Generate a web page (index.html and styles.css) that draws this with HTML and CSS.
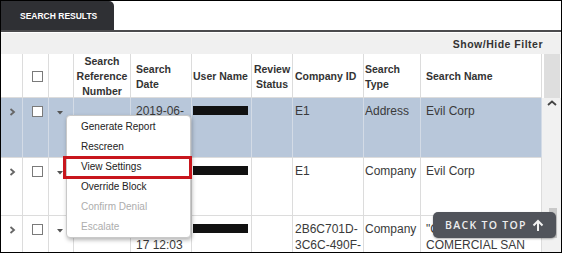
FILE: index.html
```html
<html>

<head>
  <link rel="stylesheet" href="styles.css">
</head>

<body>
  <div class="frame">
    <div class="tabbar">
      <div class="tab">SEARCH RESULTS</div>
    </div>
    <div class="filterbar">Show/Hide Filter</div>

    <div class="head">
      <div class="th"></div>
      <div class="th"><div class="cb cb-head"></div></div>
      <div class="th"></div>
      <div class="th center">Search<br>Reference<br>Number</div>
      <div class="th pad5">Search<br>Date</div>
      <div class="th pad1">User Name</div>
      <div class="th center">Review<br>Status</div>
      <div class="th pad2">Company ID</div>
      <div class="th pad1">Search<br>Type</div>
      <div class="th pad5">Search Name</div>
      <div class="gutter"></div>
    </div>

    <div class="body">
      <div class="rows">
        <div class="row r1 sel">
          <div class="td icon">
            <svg class="chev" width="7" height="8" viewBox="0 0 7 8"><polyline points="1.5,1 5,4 1.5,7" fill="none" stroke="#666" stroke-width="1.8"/></svg>
          </div>
          <div class="td icon"><div class="cb"></div></div>
          <div class="td icon">
            <svg class="caret" width="6" height="4" viewBox="0 0 6 4"><polygon points="0,0 6,0 3,3.5" fill="#555"/></svg>
          </div>
          <div class="td"></div>
          <div class="td pad5">2019-06-</div>
          <div class="td pad1"><div class="redact"></div></div>
          <div class="td"></div>
          <div class="td pad2">E1</div>
          <div class="td pad1">Address</div>
          <div class="td pad5">Evil Corp</div>
        </div>

        <div class="row r2">
          <div class="td icon">
            <svg class="chev" width="7" height="8" viewBox="0 0 7 8"><polyline points="1.5,1 5,4 1.5,7" fill="none" stroke="#666" stroke-width="1.8"/></svg>
          </div>
          <div class="td icon"><div class="cb"></div></div>
          <div class="td icon">
            <svg class="caret" width="6" height="4" viewBox="0 0 6 4"><polygon points="0,0 6,0 3,3.5" fill="#555"/></svg>
          </div>
          <div class="td"></div>
          <div class="td"></div>
          <div class="td pad1"><div class="redact"></div></div>
          <div class="td"></div>
          <div class="td pad2">E1</div>
          <div class="td pad1">Company</div>
          <div class="td pad5">Evil Corp</div>
        </div>

        <div class="row r3">
          <div class="td icon">
            <svg class="chev" width="7" height="8" viewBox="0 0 7 8"><polyline points="1.5,1 5,4 1.5,7" fill="none" stroke="#666" stroke-width="1.8"/></svg>
          </div>
          <div class="td icon"><div class="cb"></div></div>
          <div class="td icon">
            <svg class="caret" width="6" height="4" viewBox="0 0 6 4"><polygon points="0,0 6,0 3,3.5" fill="#555"/></svg>
          </div>
          <div class="td"></div>
          <div class="td pad5 second">17 12:03</div>
          <div class="td pad1"><div class="redact"></div></div>
          <div class="td"></div>
          <div class="td pad2">2B6C701D-<br>3C6C-490F-</div>
          <div class="td pad1">Company</div>
          <div class="td pad5">"C<br>COMERCIAL SAN</div>
        </div>
      </div>

      <div class="vscroll">
        <svg class="up" width="10" height="6" viewBox="0 0 10 6"><polyline points="1,5 5,1.5 9,5" fill="none" stroke="#444" stroke-width="1.8"/></svg>
        <div class="thumb"></div>
      </div>
    </div>

    <!-- row actions dropdown -->
    <div class="menu">
      <div class="item">Generate Report</div>
      <div class="item">Rescreen</div>
      <div class="item">View Settings</div>
      <div class="item">Override Block</div>
      <div class="item off">Confirm Denial</div>
      <div class="item off">Escalate</div>
    </div>
    <div class="mark"></div>

    <div class="totop">
      <span>BACK TO TOP</span>
      <svg width="12" height="13" viewBox="0 0 12 13"><path d="M6 12V2M1.5 6.5L6 2l4.5 4.5" fill="none" stroke="#f2f2f2" stroke-width="2"/></svg>
    </div>
  </div>
</body>

</html>
```

FILE: styles.css
```css
* {
  box-sizing: border-box;
}

body {
  margin: 0;
  font-family: "Liberation Sans", Arial, sans-serif;
  color: #333;
  background: #fff;
}

.frame {
  position: relative;
  width: 562px;
  height: 253px;
  border: 1px solid #000;
  overflow: hidden;
}

.tabbar {
  height: 31px;
  border-bottom: 2px solid #4b4b4e;
  display: flex;
}

.tab {
  width: 113px;
  height: 29px;
  background: #2f3034;
  color: #fff;
  font-weight: bold;
  font-size: 8.5px;
  padding-left: 19px;
  display: flex;
  align-items: center;
  border-top-right-radius: 5px;
}

.filterbar {
  margin-top: 1px;
  height: 21px;
  line-height: 22px;
  background: #f0f0f0;
  text-align: right;
  padding-right: 18px;
  font-weight: bold;
  font-size: 10.5px;
  letter-spacing: 0.5px;
  color: #333;
}

.head {
  display: grid;
  grid-template-columns: 22px 26px 25px 57px 61px 60px 41px 71px 57px 121px 19px;
  height: 44px;
  border-bottom: 1px solid #dcdcdc;
}

.th {
  border-right: 1px solid #dcdcdc;
  display: flex;
  align-items: center;
  font-weight: bold;
  font-size: 10.5px;
  line-height: 15px;
  color: #333;
}

.th.center {
  justify-content: center;
  text-align: center;
}

.gutter {
  background: #dedede;
  border-left: 2px solid #fff;
  border-right: 1px solid #fff;
}

.pad1 {
  padding-left: 1px;
}

.pad2 {
  padding-left: 2px;
}

.pad5 {
  padding-left: 5px;
}

.cb {
  width: 11px;
  height: 11px;
  border: 1px solid #7a7a7a;
  background: #fff;
}

.cb-head {
  margin-left: 9px;
}

.body {
  display: flex;
}

.rows {
  width: 541px;
}

.row {
  display: grid;
  grid-template-columns: 22px 26px 25px 57px 61px 60px 41px 71px 57px 121px;
  border-bottom: 1px solid #dcdcdc;
  font-size: 12px;
  line-height: 16px;
  color: #3a3a3a;
}

.r1 {
  height: 60px;
}

.r2 {
  height: 58px;
}

.r3 {
  height: 60px;
}

.sel {
  background: #b8c7da;
}

.td {
  border-right: 1px solid #dcdcdc;
  padding-top: 5px;
  overflow: hidden;
  white-space: nowrap;
}

.td.second {
  padding-top: 21px;
}

.sel .td {
  border-right-color: #d3dbe6;
}

.td.icon {
  padding-top: 0;
}

.td .chev {
  display: block;
  margin: 10px 0 0 8px;
}

.td .cb {
  margin: 8px 0 0 9px;
}

.td .caret {
  display: block;
  margin: 13px 0 0 8px;
}

.redact {
  width: 55px;
  height: 9px;
  margin-top: 3px;
  background: #111;
}

.vscroll {
  width: 19px;
  background: #f1f1f1;
  display: flex;
  flex-direction: column;
}

.vscroll .up {
  display: block;
  margin: 2px 0 0 5px;
}

.thumb {
  width: 8px;
  height: 30px;
  margin: 102px 0 0 7px;
  background: #c9c9c9;
}

.menu {
  position: absolute;
  left: 65px;
  top: 114px;
  width: 125px;
  height: 123px;
  background: #fff;
  border: 1px solid #c9c9c9;
  border-radius: 4px;
  box-shadow: 1px 2px 4px rgba(0, 0, 0, 0.3);
  padding-top: 1px;
  font-size: 10px;
}

.menu .item {
  height: 20px;
  line-height: 20px;
  padding-left: 14px;
  color: #222;
}

.menu .item.off {
  color: #adadad;
}

.mark {
  position: absolute;
  left: 62px;
  top: 155px;
  width: 129px;
  height: 23px;
  border: 3px solid #c8161d;
}

.totop {
  position: absolute;
  left: 432px;
  top: 211px;
  width: 123px;
  height: 26px;
  background: #51545b;
  border-radius: 5px;
  color: #eee;
  display: flex;
  align-items: center;
  padding-left: 12px;
  gap: 5px;
  font-family: "Open Sans", sans-serif;
  font-weight: 600;
  font-size: 10.5px;
  letter-spacing: 1.3px;
  box-shadow: 0 1px 2px rgba(0, 0, 0, 0.3);
}

.totop svg {
  display: block;
}
```
